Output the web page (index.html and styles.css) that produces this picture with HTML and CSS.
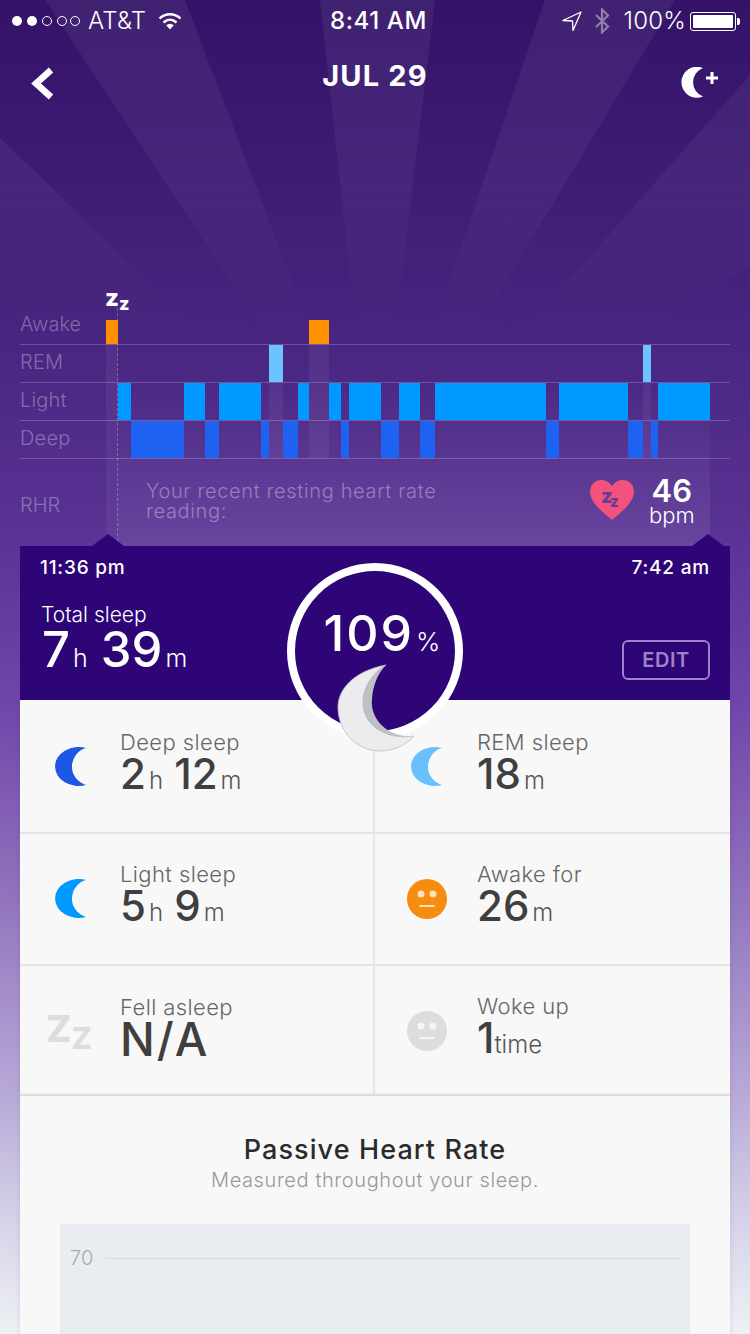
FILE: index.html
```html
<!DOCTYPE html>
<html lang="en">
<head>
<meta charset="utf-8">
<title>Sleep JUL 29</title>
<link rel="stylesheet" href="styles.css">
</head>
<body>
<div class="page">
  <svg class="rays" viewBox="0 0 750 340" width="750" height="340" aria-hidden="true">
    <defs>
      <linearGradient id="rayfade" gradientUnits="userSpaceOnUse" x1="0" y1="0" x2="0" y2="330">
        <stop offset="0" stop-color="#fff" stop-opacity=".062"/>
        <stop offset=".55" stop-color="#fff" stop-opacity=".042"/>
        <stop offset="1" stop-color="#fff" stop-opacity="0"/>
      </linearGradient>
    </defs>
    <polygon fill="url(#rayfade)" points="375,500 45,0 185,0"/>
    <polygon fill="url(#rayfade)" points="375,500 320,0 435,0"/>
    <polygon fill="url(#rayfade)" points="375,500 545,0 675,0"/>
    <polygon fill="url(#rayfade)" points="375,500 750,75 750,267"/>
    <polygon fill="url(#rayfade)" points="375,500 0,138 0,308"/>
  </svg>

  <div class="status">
    <div class="status-left">
      <svg class="signal" width="70" height="12" viewBox="0 0 70 12" aria-hidden="true">
        <circle cx="5" cy="6" r="5" fill="#fff"/>
        <circle cx="20" cy="6" r="5" fill="#fff"/>
        <circle cx="35" cy="6" r="4.5" fill="none" stroke="#fff"/>
        <circle cx="50" cy="6" r="4.5" fill="none" stroke="#fff"/>
        <circle cx="63" cy="6" r="4.5" fill="none" stroke="#fff"/>
      </svg>
      <span class="carrier">AT&amp;T</span>
      <svg class="wifi" width="24" height="18" viewBox="0 0 24 18" aria-hidden="true">
        <path d="M1.5 6.5C7.5 .8 16.5 .8 22.5 6.5" fill="none" stroke="#fff" stroke-width="2.4"/>
        <path d="M5.5 10.5C9.5 6.9 14.5 6.9 18.5 10.5" fill="none" stroke="#fff" stroke-width="2.4"/>
        <path d="M8.2 13.2C10.6 11.2 13.4 11.2 15.8 13.2L12 17.5Z" fill="#fff"/>
      </svg>
    </div>
    <div class="clock">8:41 AM</div>
    <div class="status-right">
      <svg width="20" height="20" viewBox="0 0 20 20" aria-hidden="true">
        <path d="M19 1L1 9.5L10.5 10L11 19.5Z" fill="none" stroke="#fff" stroke-width="1.3" stroke-linejoin="round"/>
      </svg>
      <svg class="bt" width="16" height="26" viewBox="0 0 16 26" aria-hidden="true">
        <path d="M2 7L14 18.5L8 24.5V1.5L14 7.5L2 19" fill="none" stroke="#fff" stroke-opacity=".42" stroke-width="2.2"/>
      </svg>
      <span class="percent">100%</span>
      <span class="battery"><span class="battery-fill"></span></span>
    </div>
  </div>

  <div class="nav">
    <svg class="nav-back" width="24" height="34" viewBox="0 0 24 34" aria-hidden="true">
      <path d="M21 3L6 16.500L21 30" fill="none" stroke="#fff" stroke-width="6.500"/>
    </svg>
    <h1 class="date">JUL 29</h1>
    <svg class="nav-add" width="40" height="32" viewBox="0 0 40 32" aria-hidden="true">
      <path d="M23 1A15.500 15.500 0 1 0 23 29.500A15.200 15.200 0 0 1 23 1Z" fill="#fff"/>
      <path d="M32 5V17M26 11H38" stroke="#fff" stroke-width="3"/>
    </svg>
  </div>

  <div class="zz-mark"><span class="z-big">z</span><span class="z-small">z</span></div>

  <div class="chart">
    <div class="window"></div>
    <div class="stripe" style="left:86px;top:0;width:12px;height:226px"></div>
    <div class="stripe" style="left:249px;top:62px;width:14px;height:76px"></div>
    <div class="stripe" style="left:289px;top:24px;width:20px;height:114px"></div>
    <div class="stripe" style="left:623px;top:62px;width:8px;height:76px"></div>
    <div class="dash"></div>

    <div class="row row-first">
      <div class="row-label">Awake</div>
      <div class="track">
        <div class="bar awake" style="left:0;width:12px"></div>
        <div class="bar awake" style="left:203px;width:20px"></div>
      </div>
    </div>
    <div class="row">
      <div class="row-label">REM</div>
      <div class="track">
        <div class="bar rem" style="left:163px;width:14px"></div>
        <div class="bar rem" style="left:537px;width:8px"></div>
      </div>
    </div>
    <div class="row">
      <div class="row-label">Light</div>
      <div class="track">
        <div class="bar light" style="left:12px;width:13px"></div>
        <div class="bar light" style="left:78px;width:21px"></div>
        <div class="bar light" style="left:113px;width:42px"></div>
        <div class="bar light" style="left:192px;width:11px"></div>
        <div class="bar light" style="left:223px;width:12px"></div>
        <div class="bar light" style="left:243px;width:32px"></div>
        <div class="bar light" style="left:293px;width:21px"></div>
        <div class="bar light" style="left:329px;width:111px"></div>
        <div class="bar light" style="left:453px;width:69px"></div>
        <div class="bar light" style="left:552px;width:52px"></div>
      </div>
    </div>
    <div class="row">
      <div class="row-label">Deep</div>
      <div class="track">
        <div class="bar deep" style="left:25px;width:53px"></div>
        <div class="bar deep" style="left:99px;width:14px"></div>
        <div class="bar deep" style="left:155px;width:8px"></div>
        <div class="bar deep" style="left:177px;width:15px"></div>
        <div class="bar deep" style="left:235px;width:8px"></div>
        <div class="bar deep" style="left:275px;width:18px"></div>
        <div class="bar deep" style="left:314px;width:15px"></div>
        <div class="bar deep" style="left:440px;width:13px"></div>
        <div class="bar deep" style="left:522px;width:15px"></div>
        <div class="bar deep" style="left:545px;width:7px"></div>
      </div>
    </div>
    <div class="rhr">
      <div class="rhr-label">RHR</div>
      <div class="rhr-text">Your recent resting heart rate reading:</div>
      <svg class="heart" width="46" height="42" viewBox="0 0 46 42" aria-hidden="true">
        <path d="M23 41C15 34 1 24 1 12.500C1 5.500 6.500 1 12 1C17 1 20.500 3.500 23 7C25.500 3.500 29 1 34 1C39.500 1 45 5.500 45 12.500C45 24 31 34 23 41Z" fill="#f2527d"/>
        <text class="heart-z1" x="12" y="24">z</text>
        <text class="heart-z2" x="21" y="28">z</text>
      </svg>
      <div class="rhr-value"><span class="rhr-num">46</span><span class="rhr-unit">bpm</span></div>
    </div>
  </div>

  <div class="summary">
    <span class="notch notch-start"></span>
    <span class="notch notch-end"></span>
    <div class="times"><span>11:36 pm</span><span>7:42 am</span></div>
    <div class="total">
      <div>
        <div class="total-label">Total sleep</div>
        <div class="total-value">7<span class="total-unit">h</span> 39<span class="total-unit">m</span></div>
      </div>
      <div class="edit">EDIT</div>
    </div>
    <div class="ring"><span class="ring-num">109</span><span class="ring-pct">%</span></div>
    <svg class="big-moon" width="78" height="88" viewBox="-1 -1 78 88" aria-hidden="true">
      <path d="M48 0C34 8 26 22 25 36C24 58 46 76 76 71L66 71C46 68 32 52 34 34C35 20 40 8 48 0Z" fill="#bfc0c4"/>
      <path d="M48 0C16 6 0 24 0 42C0 68 20 86 42 86C56 86 68 80 76 71C46 76 24 58 25 36C26 22 34 8 48 0Z" fill="#ececee" stroke="#bdbdc0" stroke-width=".8"/>
    </svg>
  </div>

  <div class="stats">
    <div class="cell">
      <div class="cell-icon"><svg class="moon moon-deep" width="32" height="40" viewBox="0 0 32 40" aria-hidden="true"><path d="M31 1A23.500 19.500 0 1 0 31 38A19.200 19.200 0 0 1 31 1Z"/></svg></div>
      <div class="cell-text"><div class="cell-label">Deep sleep</div><div class="cell-value">2<span class="cell-unit">h</span> 12<span class="cell-unit">m</span></div></div>
    </div>
    <div class="cell cell-right">
      <div class="cell-icon"><svg class="moon moon-rem" width="32" height="40" viewBox="0 0 32 40" aria-hidden="true"><path d="M31 1A23.500 19.500 0 1 0 31 38A19.200 19.200 0 0 1 31 1Z"/></svg></div>
      <div class="cell-text"><div class="cell-label">REM sleep</div><div class="cell-value">18<span class="cell-unit">m</span></div></div>
    </div>
    <div class="cell">
      <div class="cell-icon"><svg class="moon moon-light" width="32" height="40" viewBox="0 0 32 40" aria-hidden="true"><path d="M31 1A23.500 19.500 0 1 0 31 38A19.200 19.200 0 0 1 31 1Z"/></svg></div>
      <div class="cell-text"><div class="cell-label">Light sleep</div><div class="cell-value">5<span class="cell-unit">h</span> 9<span class="cell-unit">m</span></div></div>
    </div>
    <div class="cell cell-right">
      <div class="cell-icon"><svg class="face-icon" width="40" height="40" viewBox="0 0 40 40" aria-hidden="true"><circle cx="20" cy="20" r="20" fill="#f68d0f"/><circle cx="14" cy="15" r="3.500" fill="#fce2bd"/><circle cx="26" cy="15" r="3.500" fill="#fce2bd"/><rect x="12" y="26" width="16" height="2" rx="1" fill="#fce2bd"/></svg></div>
      <div class="cell-text"><div class="cell-label">Awake for</div><div class="cell-value">26<span class="cell-unit">m</span></div></div>
    </div>
    <div class="cell cell-last">
      <div class="cell-icon"><span class="grey-zz"><span class="grey-z1">Z</span><span class="grey-z2">Z</span></span></div>
      <div class="cell-text"><div class="cell-label">Fell asleep</div><div class="cell-value cell-value-wide">N/A</div></div>
    </div>
    <div class="cell cell-right cell-last">
      <div class="cell-icon"><svg class="face-icon" width="40" height="40" viewBox="0 0 40 40" aria-hidden="true"><circle cx="20" cy="20" r="20" fill="#dcdddf"/><circle cx="14" cy="15" r="3.500" fill="#f5f5f5"/><circle cx="26" cy="15" r="3.500" fill="#f5f5f5"/><rect x="12" y="26" width="16" height="2" rx="1" fill="#f5f5f5"/></svg></div>
      <div class="cell-text"><div class="cell-label">Woke up</div><div class="cell-value">1<span class="cell-unit cell-unit-tight">time</span></div></div>
    </div>
  </div>

  <div class="passive">
    <h2 class="passive-title">Passive Heart Rate</h2>
    <p class="passive-sub">Measured throughout your sleep.</p>
    <div class="hr-chart">
      <div class="hr-line"><span class="hr-tick">70</span><span class="hr-rule"></span></div>
    </div>
  </div>
</div>
</body>
</html>
```

FILE: styles.css
```css
* { box-sizing: border-box; }
html, body { margin: 0; padding: 0; }
body { font-family: Inter, "Open Sans", sans-serif; font-weight: 300; color: #fff; }

.page {
  position: relative;
  width: 750px;
  height: 1334px;
  overflow: hidden;
  background: linear-gradient(180deg, #331268 0, #47247f 320px, #5a3496 546px, #6f45aa 700px, #8e6fbb 880px, #b7a8d7 1090px, #d1cce6 1200px, #eef1f5 1334px);
}
.rays { position: absolute; left: 0; top: 0; }

/* status bar */
.status {
  position: relative;
  display: grid;
  grid-template-columns: 1fr auto 1fr;
  align-items: center;
  height: 42px;
  padding: 0 11px 0 12px;
  font-size: 24px;
  line-height: 30px;
}
.status-left, .status-right { display: flex; align-items: center; }
.status-right { justify-content: flex-end; }
.signal { margin-right: 6px; }
.carrier { letter-spacing: .2px; }
.wifi { margin-left: 12px; }
.clock { margin-left: 6px; font-weight: 500; letter-spacing: .6px; }
.bt { margin-left: 12px; }
.percent { margin-left: 14px; letter-spacing: .2px; }
.battery {
  display: block;
  position: relative;
  width: 46px;
  height: 19px;
  margin: 0 3px 0 4px;
  padding: 2px;
  border: 1px solid #fff;
  border-radius: 3px;
}
.battery::after {
  content: "";
  position: absolute;
  right: -5px;
  top: 5px;
  width: 3px;
  height: 7px;
  background: #fff;
  border-radius: 0 2px 2px 0;
}
.battery-fill { display: block; height: 100%; background: #fff; border-radius: 1px; }

/* nav */
.nav {
  position: relative;
  display: grid;
  grid-template-columns: 1fr auto 1fr;
  align-items: center;
  height: 68px;
  padding: 0 30px;
}
.nav-back { margin-top: 16px; }
.nav-add { margin-top: 14px; justify-self: end; }
.date { margin: 0; font-size: 29px; line-height: 34px; font-weight: 700; letter-spacing: 1.2px; }

/* chart */
.zz-mark {
  position: relative;
  height: 32px;
  margin: 178px 0 0 105px;
  font-weight: 800;
  line-height: 20px;
}
.z-big { font-size: 24px; }
.z-small { font-size: 18px; position: relative; top: 4px; }

.chart { position: relative; width: 710px; height: 226px; margin: 0 20px; }
.window {
  position: absolute;
  left: 98px;
  top: 62px;
  width: 592px;
  height: 164px;
  background: linear-gradient(180deg, rgba(255,255,255,0), rgba(255,255,255,.085));
}
.stripe { position: absolute; background: rgba(255,255,255,.05); }
.dash {
  position: absolute;
  left: 97px;
  top: -12px;
  height: 238px;
  border-left: 1px dashed rgba(255,255,255,.25);
}
.row {
  position: relative;
  display: flex;
  height: 38px;
  border-bottom: 1px solid rgba(255,255,255,.2);
}
.row-first { height: 25px; }
.row-label {
  width: 86px;
  font-size: 20px;
  line-height: 32px;
  margin-top: 1px;
  letter-spacing: .2px;
  color: rgba(255,255,255,.32);
}
.row-first .row-label { margin-top: -12px; letter-spacing: 0; }
.track { position: relative; flex: 1; }
.bar { position: absolute; top: 0; bottom: 0; }
.awake { background: #ff9000; }
.rem { background: #6cc3ff; }
.light { background: #0099ff; }
.deep { background: #1d62f0; }

.rhr { position: relative; display: flex; align-items: center; height: 87px; }
.rhr-label {
  width: 126px;
  padding: 5px 0 0;
  font-size: 20px;
  color: rgba(255,255,255,.32);
}
.rhr-text {
  width: 330px;
  margin-top: -4px;
  font-size: 20px;
  line-height: 20px;
  letter-spacing: .65px;
  color: rgba(255,255,255,.35);
}
.heart { margin: -6px 0 0 113px; }
.heart-z1 { font-size: 20px; font-weight: 800; fill: #6a3a98; }
.heart-z2 { font-size: 15px; font-weight: 800; fill: #6a3a98; }
.rhr-value { display: flex; flex-direction: column; align-items: center; margin: -3px 0 0 14px; }
.rhr-num { font-size: 31px; line-height: 28px; font-weight: 600; }
.rhr-unit { font-size: 22px; line-height: 20px; }

/* summary */
.summary {
  position: relative;
  z-index: 2;
  width: 710px;
  height: 154px;
  margin: 0 20px;
  padding: 9px 20px 0;
  background: #2e0577;
}
.notch {
  position: absolute;
  top: -12px;
  width: 0;
  height: 0;
  border-left: 16px solid transparent;
  border-right: 16px solid transparent;
  border-bottom: 12px solid #2e0577;
}
.notch-start { left: 72px; }
.notch-end { left: 672px; }
.times {
  display: flex;
  justify-content: space-between;
  font-size: 19px;
  line-height: 26px;
  font-weight: 500;
  letter-spacing: .8px;
}
.total {
  display: flex;
  justify-content: space-between;
  align-items: flex-end;
  margin-top: 22px;
}
.total-label { font-size: 21px; line-height: 24px; margin-left: 1px; }
.total-value { margin: -2px 0 0 2px; font-size: 49px; line-height: 50px; font-weight: 500; }
.total-unit { font-size: 25px; font-weight: 300; margin-left: 3px; }
.edit {
  width: 88px;
  height: 40px;
  margin-bottom: 3px;
  border: 2px solid #9d84ca;
  border-radius: 6px;
  font-size: 20px;
  line-height: 36px;
  font-weight: 600;
  letter-spacing: .5px;
  text-align: center;
  color: #9d84ca;
}
.ring {
  position: absolute;
  left: 267px;
  top: 17px;
  width: 176px;
  height: 176px;
  padding: 32px 0 0 14px;
  border: 8px solid #fff;
  border-radius: 50%;
  background: #2e0577;
  text-align: center;
}
.ring-num { font-size: 50px; line-height: 60px; font-weight: 500; letter-spacing: 2px; }
.ring-pct { font-size: 26px; margin-left: 2px; }
.big-moon { position: absolute; left: 317px; top: 118px; }

/* stats */
.stats {
  position: relative;
  display: grid;
  grid-template-columns: 355px 355px;
  grid-template-rows: 132px 132px 130px;
  width: 710px;
  margin: 0 20px;
  padding-top: 2px;
  background: #f8f8f8;
  box-shadow: 0 0 6px rgba(40,20,90,.1);
}
.cell {
  display: flex;
  align-items: center;
  border-right: 2px solid #e5e5e5;
  border-bottom: 2px solid #e5e5e5;
  color: #666;
}
.cell-right { border-right: 0; }
.cell-last { padding-top: 2px; }
.cell-icon { display: flex; justify-content: center; width: 100px; padding-left: 2px; }
.cell-right .cell-icon { width: 102px; }
.cell-text { padding-bottom: 3px; }
.cell-label { font-size: 22px; line-height: 24px; letter-spacing: .4px; }
.cell-value { font-size: 42px; line-height: 40px; font-weight: 500; color: #3f3f3f; }
.cell-value-wide { padding-bottom: 6px; font-size: 46px; letter-spacing: 2px; }
.cell-unit { font-size: 24px; font-weight: 300; margin-left: 3px; color: #555; }
.cell-unit-tight { margin-left: 0; }
.moon-deep { fill: #1d57e6; }
.moon-rem { fill: #69c0fd; }
.moon-light { fill: #0099ff; }
.grey-zz { display: flex; font-weight: 800; color: #dddddf; margin-right: 4px; }
.grey-z1 { font-size: 37px; line-height: 36px; }
.grey-z2 { font-size: 30px; line-height: 27px; margin-top: 14px; }

/* passive */
.passive {
  position: relative;
  width: 710px;
  height: 300px;
  margin: 0 20px;
  padding-top: 36px;
  background: #f8f8f8;
  box-shadow: 0 0 6px rgba(40,20,90,.1);
  text-align: center;
}
.passive-title { margin: 0; font-size: 27px; line-height: 36px; font-weight: 500; letter-spacing: 1.1px; color: #2b2b2b; }
.passive-sub { margin: 0; font-size: 20px; line-height: 24px; letter-spacing: .6px; color: #999; }
.hr-chart { height: 200px; margin: 32px 40px 0; padding: 23px 10px 0; background: #e9ecf1; }
.hr-line { display: flex; align-items: center; gap: 13px; font-size: 20px; line-height: 22px; color: #aaa; }
.hr-rule { flex: 1; height: 1px; background: #d6dae1; }
```
